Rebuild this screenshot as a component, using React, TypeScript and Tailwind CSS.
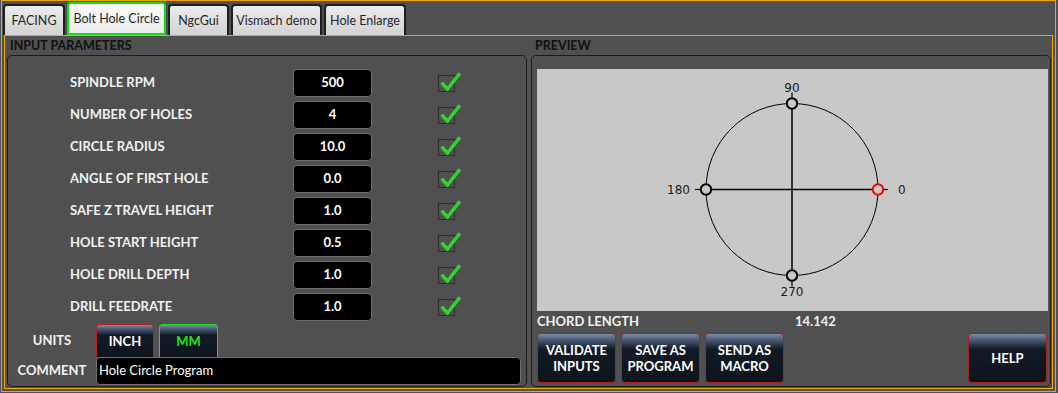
import React from 'react'

const tabs = [
  { name: 'FACING', w: 'w-[62px]' },
  { name: 'Bolt Hole Circle', w: 'w-[99px]', active: true },
  { name: 'NgcGui', w: 'w-[61px]' },
  { name: 'Vismach demo', w: 'w-[91px]' },
  { name: 'Hole Enlarge', w: 'w-[82px]' },
]

const params = [
  ['SPINDLE RPM', '500'],
  ['NUMBER OF HOLES', '4'],
  ['CIRCLE RADIUS', '10.0'],
  ['ANGLE OF FIRST HOLE', '0.0'],
  ['SAFE Z TRAVEL HEIGHT', '1.0'],
  ['HOLE START HEIGHT', '0.5'],
  ['HOLE DRILL DEPTH', '1.0'],
  ['DRILL FEEDRATE', '1.0'],
]

const btn =
  'rounded-[4px] border bg-[linear-gradient(to_bottom,#7d8ca8_0%,#45546c_14%,#121a25_32%,#0d141c_100%)] font-bold text-[13px] leading-[16px] flex items-center justify-center text-center'

function Check() {
  return (
    <div className="relative w-[17px] h-[17px] border border-[#2e2e2e]">
      <svg className="absolute left-0 top-0 overflow-visible" width="17" height="17" viewBox="0 0 17 17">
        <path d="M3.5 7.8 L8.5 13 L20 -1.5" fill="none" stroke="#2ed82a" strokeWidth="3.6" strokeLinecap="round" strokeLinejoin="round" />
      </svg>
    </div>
  )
}

function Preview() {
  const cx = 255
  const cy = 120.5
  const r = 86
  const bg = '#c8c8c8'
  return (
    <svg width="510" height="242" className="block">
      <circle cx={cx} cy={cy} r={r} fill="none" stroke="#000" strokeWidth="1" />
      <line x1={cx} y1={cy - r} x2={cx} y2={cy + r} stroke="#000" strokeWidth="1.5" />
      <line x1={cx - r} y1={cy} x2={cx + r} y2={cy} stroke="#000" strokeWidth="1.5" />
      {/* ticks */}
      <line x1={cx} y1={cy - r - 6} x2={cx} y2={cy - r - 11} stroke="#000" strokeWidth="1.2" />
      <line x1={cx} y1={cy + r + 6} x2={cx} y2={cy + r + 11} stroke="#000" strokeWidth="1.2" />
      <line x1={cx - r - 6} y1={cy} x2={cx - r - 11} y2={cy} stroke="#000" strokeWidth="1.2" />
      <line x1={cx + r + 6} y1={cy} x2={cx + r + 10} y2={cy} stroke="#000" strokeWidth="1.2" />
      {/* holes */}
      <circle cx={cx} cy={cy - r} r="5.2" fill={bg} stroke="#000" strokeWidth="2" />
      <circle cx={cx - r} cy={cy} r="5.2" fill={bg} stroke="#000" strokeWidth="2" />
      <circle cx={cx} cy={cy + r} r="5.2" fill={bg} stroke="#000" strokeWidth="2" />
      <circle cx={cx + r} cy={cy} r="5.2" fill={bg} stroke="#ff0000" strokeWidth="2" />
      <g fontFamily="'DejaVu Sans', sans-serif" fontSize="12" fill="#1a1a1a">
        <text x={cx} y="22.5" textAnchor="middle">90</text>
        <text x="153" y="124.5" textAnchor="end">180</text>
        <text x="361" y="124.5">0</text>
        <text x={cx} y="227" textAnchor="middle">270</text>
      </g>
    </svg>
  )
}

export default function App() {
  return (
    <div className="w-[1058px] h-[393px] bg-[#505050] overflow-hidden font-['Lato','Noto_Sans',sans-serif]">
      <div className="ml-[1px] w-[1055px] h-[392px] border border-[#f5a300] flex flex-col">
        {/* Tabs */}
        <div className="h-[34px] flex items-end gap-[2px] pl-[1px]">
          {tabs.map((t) => (
            <div
              key={t.name}
              className={
                t.w +
                ' flex items-center justify-center pt-[2px] rounded-t-[4px] font-[\'Noto_Sans\',sans-serif] text-[12.5px] text-[#262626] ' +
                (t.active
                  ? 'h-[33px] border-2 border-[#10e010] bg-[linear-gradient(to_bottom,#fbfbfb,#ececec)]'
                  : 'h-[31px] border-2 border-b-0 border-[#1e1e1e] bg-[linear-gradient(to_bottom,#ececec,#d2d2d2)]')
              }
            >
              {t.name}
            </div>
          ))}
        </div>

        {/* Frame */}
        <div className="mx-[2px] mb-[2px] flex-1 border border-[#f5a300] flex gap-[4px] pl-[2px] pr-[1px]">
          {/* Input parameters */}
          <div className="w-[520px] flex flex-col">
            <div className="h-[19px] leading-[19px] pl-[3px] text-[12.5px] font-bold text-[#111]">INPUT PARAMETERS</div>
            <div className="flex-1 mb-[1px] border border-[#1c1c1c] rounded-[5px] pt-[13px] flex flex-col">
              <div className="flex flex-col gap-[4px]">
                {params.map(([label, value]) => (
                  <div key={label} className="h-[28px] flex items-center">
                    <div className="w-[285px] pl-[62px] text-[13px] font-bold text-[#f2f2f2]">{label}</div>
                    <div className="w-[79px] h-[28px] rounded-[4px] border border-[#6e6e6e] bg-black flex items-center justify-center text-[13px] font-bold text-white">
                      {value}
                    </div>
                    <div className="ml-[66px]">
                      <Check />
                    </div>
                  </div>
                ))}
              </div>
              <div className="mt-[3px] h-[33px] flex items-center">
                <div className="w-[88px] text-center text-[13px] font-bold text-[#f2f2f2]">UNITS</div>
                <div className="flex gap-[5px] self-stretch">
                  <div className={btn + ' w-[58px] border-[#b82020] border-b-0 rounded-b-none text-white'}>INCH</div>
                  <div className={btn + ' w-[59px] border-[#16e016] border-b-0 rounded-b-none text-[#22e022]'}>MM</div>
                </div>
              </div>
              <div className="h-[28px] flex items-center pr-[5px]">
                <div className="w-[88px] text-center text-[13px] font-bold text-[#f2f2f2]">COMMENT</div>
                <div className="flex-1 h-[28px] rounded-[4px] border border-[#6e6e6e] bg-black flex items-center pl-[2px] text-[13px] text-white">
                  Hole Circle Program
                </div>
              </div>
            </div>
          </div>

          {/* Preview */}
          <div className="w-[520px] flex flex-col">
            <div className="h-[19px] leading-[19px] pl-[4px] text-[12.5px] font-bold text-[#111]">PREVIEW</div>
            <div className="flex-1 mb-[1px] border border-[#1c1c1c] rounded-[5px] pt-[13px] pl-[5px] pr-[2px] flex flex-col">
              <div className="h-[242px] bg-[#c8c8c8]">
                <Preview />
              </div>
              <div className="h-[22px] flex items-center text-[13px] font-bold text-[#f2f2f2]">
                <div className="w-[258px]">CHORD LENGTH</div>
                <div>14.142</div>
              </div>
              <div className="flex gap-[5px] h-[50px] pr-[1px]">
                <div className={btn + ' w-[79px] border-[#a82020] text-white'}>VALIDATE<br />INPUTS</div>
                <div className={btn + ' w-[79px] border-[#a82020] text-white'}>SAVE AS<br />PROGRAM</div>
                <div className={btn + ' w-[79px] border-[#a82020] text-white'}>SEND AS<br />MACRO</div>
                <div className={btn + ' w-[79px] ml-auto border-[#a82020] text-white'}>HELP</div>
              </div>
            </div>
          </div>
        </div>
      </div>
    </div>
  )
}
